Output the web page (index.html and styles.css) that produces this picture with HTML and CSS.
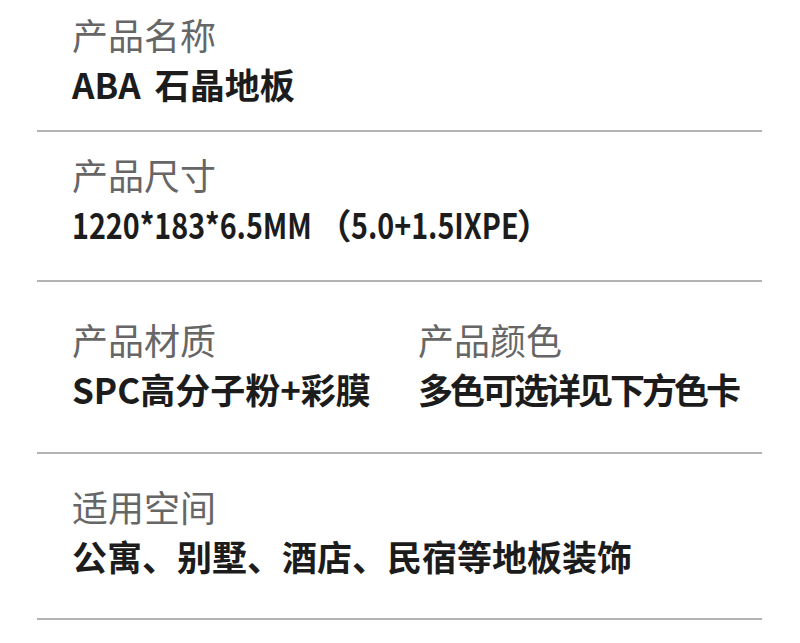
FILE: index.html
```html
<!DOCTYPE html>
<html lang="zh-CN">
<head>
<meta charset="utf-8">
<title>产品参数</title>
<link rel="stylesheet" href="styles.css">
</head>
<body>
<div class="spec-list">
  <section class="item item-1">
    <div class="field">
      <div class="label">产品名称</div>
      <div class="value value-name">ABA 石晶地板</div>
    </div>
  </section>
  <section class="item item-2">
    <div class="field">
      <div class="label">产品尺寸</div>
      <div class="value"><span class="narrow narrow-a">1220*183*6.5MM</span>（<span class="narrow narrow-b">5.0+1.5IXPE</span>）</div>
    </div>
  </section>
  <section class="item item-3 two-col">
    <div class="field">
      <div class="label">产品材质</div>
      <div class="value">SPC高分子粉+彩膜</div>
    </div>
    <div class="field">
      <div class="label">产品颜色</div>
      <div class="value value-tight">多色可选详见下方色卡</div>
    </div>
  </section>
  <section class="item item-4">
    <div class="field">
      <div class="label">适用空间</div>
      <div class="value">公寓、别墅、酒店、民宿等地板装饰</div>
    </div>
  </section>
</div>
</body>
</html>
```

FILE: styles.css
```css
html, body {
  margin: 0;
  padding: 0;
  background: #ffffff;
}

body {
  font-family: "Noto Sans CJK SC", "Noto Sans", sans-serif;
  width: 800px;
  height: 643px;
  overflow: hidden;
}

.spec-list {
  margin: 0 38px 0 37px;
}

.item {
  padding-left: 35px;
  border-bottom: 2px solid #b3b3b3;
}

.item-1 { padding-top: 9px; padding-bottom: 21px; }
.item-2 { padding-top: 17px; padding-bottom: 31px; }
.item-3 { padding-top: 32px; padding-bottom: 38px; }
.item-4 { padding-top: 27px; padding-bottom: 37px; }

.two-col {
  display: grid;
  grid-template-columns: 346px auto;
}

.label {
  font-size: 36px;
  line-height: 50px;
  color: #666666;
  font-weight: 400;
}

.value {
  font-size: 35px;
  line-height: 50px;
  color: #1c1c1c;
  font-weight: 600;
  white-space: nowrap;
}

.value-name {
  word-spacing: 6px;
}

.value-tight {
  letter-spacing: -3px;
}

/* the reference sets the Latin part of the size in a condensed face */
.narrow {
  display: inline-block;
  transform: scaleX(0.82);
  transform-origin: left center;
}

.narrow-a {
  margin-right: -48px;
}

.narrow-b {
  margin-right: -39px;
}
```
